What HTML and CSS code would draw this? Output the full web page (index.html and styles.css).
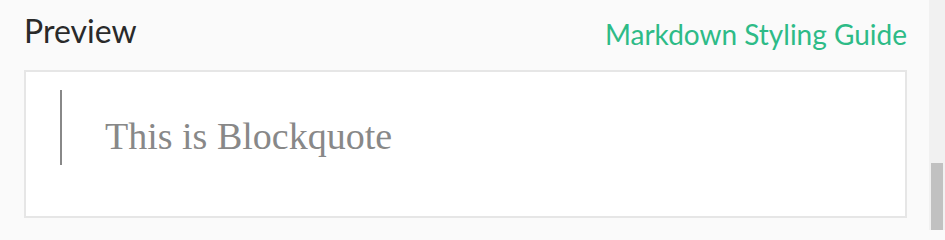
FILE: index.html
```html
<!DOCTYPE html>
<html>
<head>
<meta charset="utf-8">
<link rel="stylesheet" href="styles.css">
</head>
<body>
<div class="page">
  <main class="main">
    <header class="head">
      <h2 class="title">Preview</h2>
      <a class="guide" href="#">Markdown Styling Guide</a>
    </header>
    <section class="preview">
      <blockquote class="quote">This is Blockquote</blockquote>
    </section>
  </main>
  <div class="scrollbar"><div class="thumb"></div></div>
</div>
</body>
</html>
```
FILE: styles.css
```css
html, body {
  margin: 0;
  padding: 0;
}
body {
  background: #fafafa;
  font-family: Lato, "Open Sans", sans-serif;
}
.page {
  display: flex;
  width: 945px;
  height: 230px;
  overflow: hidden;
}
.main {
  flex: 1;
  padding: 0 22px 0 24px;
}
.head {
  display: flex;
  justify-content: space-between;
  align-items: flex-start;
  height: 70px;
}
.title {
  margin: 0;
  padding-top: 11px;
  font-size: 32px;
  font-weight: 400;
  line-height: 40px;
  color: #2a2a2a;
}
.guide {
  padding-top: 16px;
  font-size: 28px;
  line-height: 36px;
  color: #2dbb87;
  text-decoration: none;
}
.preview {
  height: 126px;
  border: 2px solid #e6e6e6;
  background: #fff;
  padding: 18px 0 0 34px;
}
.quote {
  margin: 0;
  border-left: 2px solid #888;
  height: 51px;
  padding: 24px 0 0 43px;
  font-family: "Liberation Serif", serif;
  font-size: 38px;
  line-height: 44px;
  color: #888;
}
.scrollbar {
  width: 16px;
  background: #f1f1f1;
  display: flex;
  flex-direction: column;
  justify-content: flex-end;
  align-items: center;
}
.thumb {
  width: 12px;
  height: 67px;
  background: #c1c1c1;
}
```
